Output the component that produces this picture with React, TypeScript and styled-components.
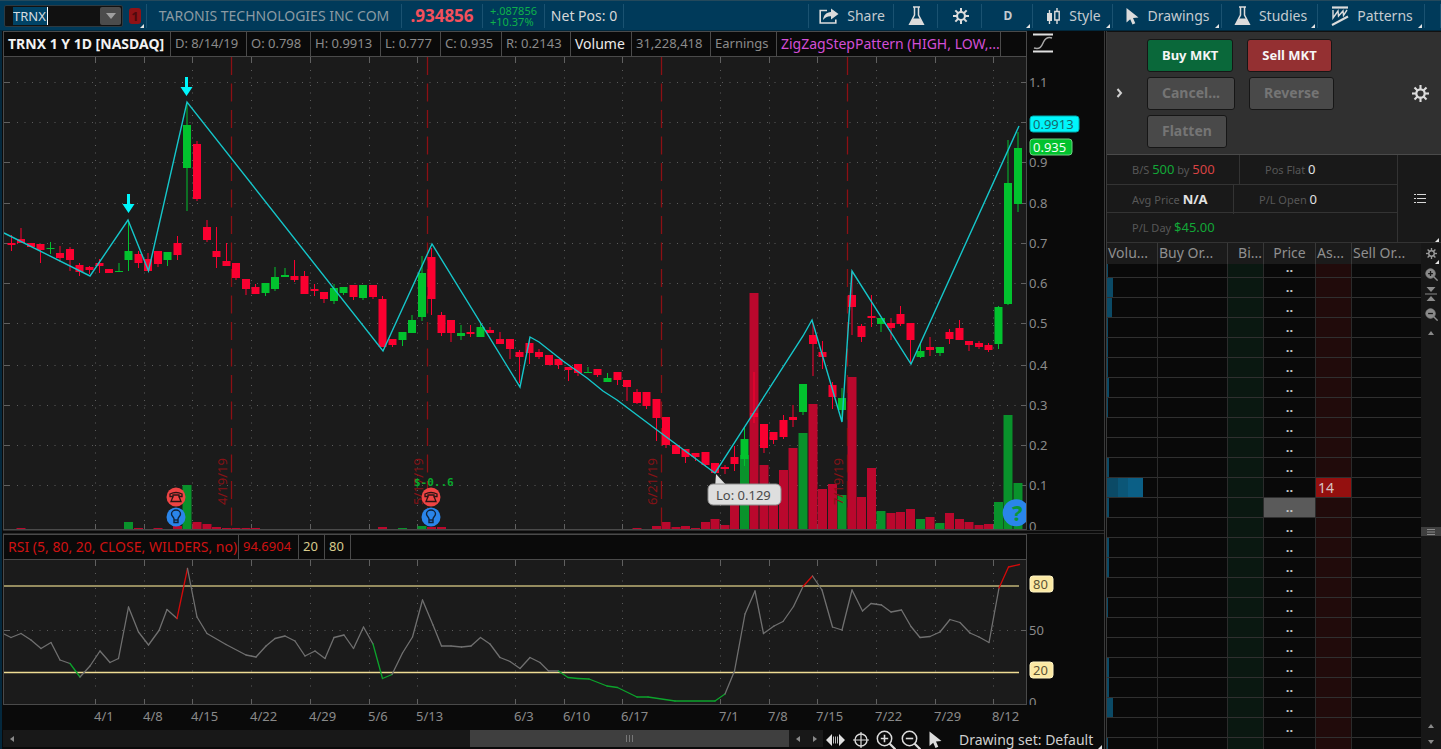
import React from 'react';
import styled, { createGlobalStyle } from 'styled-components';

const GlobalStyle = createGlobalStyle`
  * { box-sizing: border-box; }
  body {
    margin: 0;
    background: #0a0a0a;
    color: #c8c8c8;
    font-family: 'Noto Sans', 'Open Sans', sans-serif;
    font-size: 13px;
    line-height: 18px;
  }
  button, input {
    font: inherit;
    color: inherit;
    margin: 0;
    padding: 0;
    border: 0;
    background: none;
  }
  svg { display: block; }
`;

/* ---------- shell ---------- */

const Page = styled.div`
  display: flex;
  flex-direction: column;
  height: 100vh;
  min-width: 1200px;
  overflow: hidden;
`;

const Body = styled.main`
  display: flex;
  flex: 1;
  min-height: 0;
`;

const ChartPane = styled.section`
  flex: 1;
  min-width: 0;
  padding-left: 3px;
  display: flex;
  flex-direction: column;
  background: linear-gradient(90deg, #04283d 2px, #0a0a0a 2px);
`;

const PaneSplit = styled.div`
  width: 3px;
  background: #0a0a0a;
  border: solid #3a3a3a;
  border-width: 0 1px;
`;

const TradePane = styled.aside`
  width: 334px;
  display: flex;
  flex-direction: column;
  min-height: 0;
  border-top: 1px solid #111;
  background: #1b1b1b;
`;

/* ---------- top toolbar ---------- */

const TopBar = styled.header`
  display: flex;
  height: 31px;
  padding: 3px 0 2px;
  background: #003a5a;
  border-top: 1px solid #24495c;
  border-bottom: 1px solid #02283c;
`;

const barCell = `
  display: flex;
  align-items: center;
  justify-content: center;
  gap: 8px;
  position: relative;
  border-right: 1px solid #1a5271;
  white-space: nowrap;
`;

const BarCell = styled.div<{ $w: number; $tone?: string }>`
  ${barCell}
  width: ${(p) => p.$w}px;
  color: ${(p) => p.$tone || '#d8d8d8'};
  font-size: 14px;
`;

const SymbolCell = styled.div`
  ${barCell}
  width: 147px;
  padding-left: 4px;
  gap: 6px;
  justify-content: flex-start;
`;

const BarButton = styled.button<{ $w: number }>`
  ${barCell}
  width: ${(p) => p.$w}px;
  padding-left: 2px;
  color: #c4cbd0;
  font-size: 14px;
  border-right: 1px solid #1a5271;
`;

const Aggregation = styled.b`
  font-size: 12px;
`;

const BarSpace = styled.div`
  flex: 1;
  border-right: 1px solid #1a5271;
`;

const Corner = styled.i`
  position: absolute;
  right: 2px;
  bottom: 0;
  border: solid transparent;
  border-width: 4px 0 0 4px;
  border-right: 4px solid #e4e4e4;
  border-top: 4px solid transparent;
  border-left: 0;
  width: 0;
  height: 0;
`;

const SymbolBox = styled.div`
  display: flex;
  width: 119px;
  flex: none;
  height: 22px;
  padding: 1px;
  background: #111;
  border: 1px solid #2c3a42;
  border-radius: 2px;
`;

const SymbolInput = styled.input`
  flex: 1;
  min-width: 0;
  padding-left: 7px;
  outline: 0;
  color: #d6dde0;
  background: linear-gradient(90deg, #004366 34px, #fff 34px, #fff 35px, #111 35px) 7px 0 no-repeat;
`;

const SymbolDrop = styled.button`
  width: 21px;
  background: #4c4c4c;
  display: grid;
  place-items: center;
  border-radius: 2px;
`;

const LinkBadge = styled.button`
  width: 12px;
  height: 16px;
  border-radius: 3px;
  background: #8e1216;
  color: #4f0a0d;
  font-weight: 700;
  line-height: 16px;
`;

const LastPrice = styled.strong`
  font-size: 17px;
  color: #f4505c;
`;

const Change = styled.div`
  font-size: 11px;
  line-height: 11px;
  color: #0eb24a;
`;

/* ---------- chart ---------- */

const LegendRow = styled.div`
  display: flex;
  height: 26px;
`;

const Legend = styled.div`
  flex: 1024 1 0;
  min-width: 0;
  display: flex;
  background: #0a0a0a;
  border: 1px solid #4a4a4a;
`;

const LegendCell = styled.div<{ $tone?: string; $strong?: boolean; $size?: number; $w: number }>`
  width: ${(p) => p.$w}px;
  padding-left: 4px;
  font-size: ${(p) => p.$size || 13}px;
  line-height: 23px;
  white-space: nowrap;
  border-right: 1px solid #4a4a4a;
  color: ${(p) => p.$tone || '#8a8a8a'};
  font-weight: ${(p) => (p.$strong ? 700 : 400)};
`;

const LegendAxis = styled.div`
  flex: 77 1 0;
  svg { margin-left: 6px; }
`;

const ChartSvg = styled.svg`
  width: 100%;
  height: auto;
  flex: none;
`;

const StudySplit = styled.div`
  height: 4px;
  flex: none;
  background: #0a0a0a;
  border: solid #2c2c2c;
  border-width: 1px 0;
`;

const Footer = styled.div`
  display: flex;
  flex: 1;
  align-items: flex-start;
  min-height: 19px;
`;

const Scroll = styled.div`
  flex: 1;
  display: flex;
  height: 17px;
  background: #181818;
`;

const ScrollArrow = styled.button`
  width: 17px;
  height: 17px;
  display: grid;
  place-items: center;
`;

const ScrollGap = styled.div<{ $grow: number }>`
  flex: ${(p) => p.$grow} 1 0;
`;

const ScrollThumb = styled.div<{ $grow: number }>`
  flex: ${(p) => p.$grow} 1 0;
  background: #3f3f3f;
  display: grid;
  place-items: center;
`;

const ChartTools = styled.div`
  width: 281px;
  height: 19px;
  display: flex;
  align-items: center;
  position: relative;
`;

const ToolButton = styled.button`
  width: 25px;
  height: 19px;
  display: grid;
  place-items: center;
`;

const DrawingSet = styled.button`
  flex: 1;
  text-align: left;
  padding-left: 11px;
  white-space: nowrap;
  font-size: 14px;
  color: #cfcfcf;
`;

/* ---------- trade panel ---------- */

const OrderBar = styled.div`
  display: flex;
  align-items: center;
  height: 123px;
  background: #303030;
  border-bottom: 1px solid #4a4a4a;
`;

const Expand = styled.button`
  width: 25px;
  height: 24px;
  display: grid;
  place-items: center;
`;

const OrderButtons = styled.div`
  flex: 1;
  display: flex;
  flex-direction: column;
  gap: 5px;
  padding-left: 15px;
`;

const OrderLine = styled.div`
  display: flex;
  gap: 14px;
`;

const OrderButton = styled.button<{ $tone?: string }>`
  height: 33px;
  padding: 0 14px;
  border: 1px solid #161616;
  border-radius: 3px;
  font-weight: 700;
  font-size: ${(p) => (p.$tone ? 13 : 14)}px;
  background: ${(p) => p.$tone || '#494949'};
  color: ${(p) => (p.$tone ? '#f6f6f6' : '#757575')};
`;

const GearButton = styled.button`
  width: 42px;
  height: 30px;
  display: grid;
  place-items: center;
`;

const Summary = styled.div`
  display: flex;
  height: 88px;
  background: #191919;
  border-bottom: 1px solid #333;
`;

const SummaryRows = styled.div`
  width: 291px;
  display: grid;
  grid-template-rows: 30px 28px 1fr;
  border-right: 1px solid #333;
`;

const SummaryRow = styled.div<{ $cols: string }>`
  display: grid;
  grid-template-columns: ${(p) => p.$cols};
  align-items: stretch;
  border-bottom: 1px solid #333;
  &:last-child { border-bottom: 0; }
`;

const SummaryCell = styled.div<{ $line?: boolean }>`
  padding-left: 25px;
  line-height: 29px;
  font-size: 11px;
  white-space: nowrap;
  color: #575757;
  border-right: ${(p) => (p.$line ? '1px solid #333' : '0')};
`;

const Figure = styled.span<{ $tone?: string; $strong?: boolean }>`
  font-size: 13px;
  color: ${(p) => p.$tone || '#e2e2e2'};
  font-weight: ${(p) => (p.$strong ? 700 : 400)};
`;

const ListButton = styled.button`
  flex: 1;
  display: grid;
  place-items: center;
  position: relative;
`;

const LadderWrap = styled.div`
  flex: 1;
  display: flex;
  min-height: 0;
`;

const LadderScroll = styled.div`
  flex: 1;
  min-width: 0;
  overflow: hidden;
`;

const Ladder = styled.table`
  width: 100%;
  table-layout: fixed;
  border-collapse: separate;
  border-spacing: 0;
  background: #090909;
`;

const LadderHead = styled.th<{ $w: number; $align?: string }>`
  width: ${(p) => p.$w}px;
  height: 21px;
  padding: 0 1px 2px;
  background: #1b1b1b;
  border-right: 1px solid #383838;
  font-weight: 400;
  font-size: 14px;
  color: #8f8f8f;
  text-align: ${(p) => p.$align || 'left'};
  white-space: nowrap;
  line-height: 18px;
  &:last-child { border-right: 0; }
`;

const LadderCell = styled.td<{ $bg?: string; $h: number }>`
  height: ${(p) => p.$h}px;
  padding: 0;
  vertical-align: bottom;
  line-height: ${(p) => p.$h - 1}px;
  border-right: 1px solid #2b2b2b;
  border-bottom: 1px solid #303030;
  background: ${(p) => p.$bg || 'transparent'};
  color: #c8c8c8;
  &:last-child { border-right: 0; }
`;

const Dots = styled.div`
  text-align: center;
  height: 6px;
  line-height: 6px;
  margin-bottom: 7px;
  font-weight: 700;
`;

const AskSize = styled.div`
  padding-left: 2px;
  font-size: 14px;
  background: #94100f;
  color: #d8c4c4;
`;

const VolumeBar = styled.div<{ $h: number }>`
  height: ${(p) => p.$h}px;
  background: linear-gradient(90deg, #0b4a66 11px, #0b5677 11px, #0b5677 21px, #0b5f86 21px);
`;

const LadderRail = styled.div`
  width: 20px;
  display: flex;
  flex-direction: column;
  align-items: center;
  background: #171717;
  position: relative;
`;

const RailButton = styled.button<{ $h: number }>`
  width: 20px;
  height: ${(p) => p.$h}px;
  flex: none;
  display: grid;
  place-items: center;
  position: relative;
`;

const RailSpace = styled.div<{ $grow: number }>`
  flex: ${(p) => p.$grow} 1 0;
`;

const RailGrip = styled.div`
  width: 20px;
  height: 9px;
  display: grid;
  place-items: center;
  background: #3f3f3f;
`;

/* ---------- icons ---------- */

const Gear = ({ size, tone, hole }: { size: number; tone: string; hole: string }) => (
  <svg width={size} height={size} viewBox="0 0 16 16" aria-hidden="true">
    {[0, 45, 90, 135].map((a) => (
      <path key={a} d="M8 0v16" stroke={tone} strokeWidth="2" transform={`rotate(${a} 8 8)`} />
    ))}
    <circle cx="8" cy="8" r="5" fill={tone} />
    <circle cx="8" cy="8" r="2.9" fill={hole} />
  </svg>
);

const Flask = () => (
  <svg width="17" height="20" viewBox="0 0 17 20" aria-hidden="true">
    <path d="M5 1h7M6.5 1v8L1.7 18.2h13.6L10.5 9V1" fill="none" stroke="#dcdcdc" strokeWidth="1.5" />
    <path d="M4.6 12.6h7.8l3.2 6.2H1.4z" fill="#dcdcdc" />
  </svg>
);

const ShareIcon = () => (
  <svg width="20" height="16" viewBox="0 0 20 16" aria-hidden="true">
    <path d="M8 2.500H1.200v12.500h15.600V11.500" fill="none" stroke="#dcdcdc" strokeWidth="1.600" />
    <path d="M4 12C4.500 7 7.500 4.200 12 4V.500l7.500 5.500L12 11.500V8.200C8.500 8 6 9.500 4 12z" fill="#dcdcdc" />
  </svg>
);

const Pointer = ({ w, h }: { w: number; h: number }) => (
  <svg width={w} height={h} viewBox="0 0 13 17" aria-hidden="true">
    <path d="M0.500 0v14.500l3.700-3.300 2.300 5.300 2.800-1.200-2.300-5.200 5.500-.5z" fill="#dcdcdc" />
  </svg>
);

const Candles = () => (
  <svg width="15" height="17" viewBox="0 0 15 17" aria-hidden="true">
    <path d="M3.500 2v14M11 0v3M11 12v4" stroke="#dcdcdc" strokeWidth="1.4" />
    <path d="M1 5h5v8H1z" fill="#dcdcdc" />
    <path d="M8.800 3.500h4.400v8.500H8.800z" fill="none" stroke="#dcdcdc" strokeWidth="1.4" />
  </svg>
);

const PatternIcon = () => (
  <svg width="18" height="20" viewBox="0 0 18 20" aria-hidden="true">
    <path d="M1 1.500h16" stroke="#dcdcdc" strokeWidth="2.200" />
    <path d="M2 4v8l5-7 .500 5L12 5l.500 4.500L16 4" fill="none" stroke="#dcdcdc" strokeWidth="1.400" />
    <path d="M1 19L17 10.500" stroke="#dcdcdc" strokeWidth="2" />
  </svg>
);

const Magnifier = ({ size, plus, solid }: { size: number; plus?: boolean; solid?: boolean }) => (
  <svg width={size} height={size} viewBox="0 0 20 20" aria-hidden="true">
    <circle cx="8.500" cy="8.500" r="7.200" fill={solid ? '#8a8a8a' : 'none'} stroke={solid ? '#8a8a8a' : '#dcdcdc'} strokeWidth="1.500" />
    <path d="M13.500 13.500l6 6" stroke={solid ? '#8a8a8a' : '#dcdcdc'} strokeWidth="2.200" />
    <path d={plus ? 'M4.800 8.500h7.400M8.500 4.800v7.400' : 'M4.800 8.500h7.400'} stroke={solid ? '#171717' : '#dcdcdc'} strokeWidth={solid ? 2 : 1.600} />
  </svg>
);

const Tri = ({ dir, tone = '#8a8a8a' }: { dir: 'l' | 'r' | 'u' | 'd'; tone?: string }) => {
  const shape = { l: 'M6 1v6L2 4z', r: 'M2 1v6l4-3z', u: 'M1 6h6L4 2z', d: 'M1 2h6L4 6z' }[dir];
  return (
    <svg width="8" height="8" viewBox="0 0 8 8" aria-hidden="true">
      <path d={shape} fill={tone} />
    </svg>
  );
};

/* ---------- chart data ---------- */

const barX = (i: number) => Math.round((11.3 + i * 9.774) * 2) / 2;

// [up, bodyTop, bodyBottom, wickTop, wickBottom]
const candles: [number, number, number, number, number][] = [
  [0, 243, 245, 235, 251], [0, 239, 243, 228, 243], [0, 243, 247, 243, 247], [0, 244, 250, 244, 263],
  [1, 248, 249, 242, 254], [0, 253, 258, 246, 262], [0, 249, 260, 247, 271], [0, 265, 272, 263, 276],
  [0, 267, 270, 266, 274], [0, 263, 266, 259, 273], [0, 269, 273, 269, 273], [1, 271, 272, 263, 272],
  [1, 251, 260, 220, 271], [0, 254, 263, 251, 268], [0, 259, 271, 253, 271], [0, 251, 264, 251, 267],
  [1, 252, 260, 252, 266], [0, 243, 255, 236, 260], [1, 125, 168, 103, 211], [0, 144, 199, 141, 201],
  [0, 227, 240, 220, 242], [0, 251, 257, 227, 268], [0, 261, 266, 243, 266], [0, 263, 278, 263, 280],
  [0, 279, 289, 279, 295], [0, 287, 294, 284, 294], [1, 283, 293, 283, 296], [1, 277, 289, 267, 291],
  [1, 275, 277, 268, 277], [0, 276, 280, 260, 282], [0, 276, 294, 271, 294], [0, 289, 291, 284, 296],
  [0, 292, 299, 292, 303], [1, 288, 301, 284, 304], [1, 287, 293, 287, 295], [0, 285, 297, 285, 300],
  [1, 285, 298, 285, 300], [0, 285, 297, 285, 299], [0, 299, 347, 296, 347], [0, 339, 345, 339, 347],
  [1, 332, 340, 332, 346], [1, 320, 333, 315, 333], [1, 273, 317, 256, 321], [0, 257, 299, 248, 315],
  [0, 315, 333, 312, 336], [0, 320, 333, 320, 342], [1, 333, 336, 325, 340], [0, 332, 334, 325, 337],
  [1, 327, 337, 323, 337], [0, 330, 333, 327, 333], [0, 339, 344, 332, 344], [0, 339, 349, 339, 359],
  [0, 352, 357, 350, 383], [0, 343, 353, 338, 364], [0, 352, 357, 349, 359], [0, 355, 365, 355, 365],
  [0, 359, 365, 359, 369], [0, 367, 370, 367, 381], [0, 364, 373, 364, 376], [1, 372, 373, 367, 373],
  [0, 369, 375, 369, 377], [1, 378, 382, 373, 382], [0, 372, 380, 372, 385], [0, 380, 387, 380, 401],
  [0, 392, 403, 389, 404], [0, 392, 406, 392, 409], [0, 399, 418, 399, 441], [0, 417, 445, 417, 448],
  [0, 445, 454, 445, 454], [0, 449, 457, 449, 463], [0, 453, 457, 453, 461], [0, 452, 465, 452, 466],
  [0, 463, 473, 463, 473], [0, 467, 469, 465, 474], [0, 457, 464, 446, 471], [1, 439, 459, 427, 466],
  [0, 413, 417, 372, 423], [0, 424, 448, 424, 453], [0, 432, 440, 432, 444], [0, 420, 437, 415, 439],
  [0, 417, 420, 405, 427], [1, 384, 412, 384, 415], [0, 335, 344, 323, 376], [0, 352, 357, 341, 369],
  [0, 385, 397, 382, 409], [1, 398, 410, 388, 421], [0, 295, 307, 271, 335], [0, 326, 337, 324, 342],
  [0, 316, 318, 295, 327], [1, 318, 324, 318, 332], [0, 323, 328, 318, 340], [0, 314, 324, 306, 326],
  [0, 323, 340, 323, 363], [1, 351, 357, 343, 358], [0, 347, 350, 337, 356], [1, 347, 353, 347, 356],
  [0, 332, 339, 329, 344], [0, 328, 340, 320, 340], [0, 341, 345, 341, 351], [0, 343, 347, 341, 349],
  [0, 345, 350, 343, 352], [1, 307, 344, 306, 349], [1, 183, 304, 140, 305], [1, 148, 204, 132, 212],
];

// [bar index, top, up]
const volumes: [number, number, number][] = [
  [1, 528, 0], [12, 522, 1], [13, 528, 0], [15, 528, 0], [17, 526, 0], [18, 485, 1], [19, 522, 0],
  [20, 524, 0], [21, 527, 0], [22, 528, 0], [23, 528, 0], [24, 528, 0], [25, 528, 0], [38, 527, 0],
  [40, 528, 1], [42, 526, 1], [43, 527, 0], [44, 527, 0], [64, 528, 0], [66, 526, 0], [67, 522, 0],
  [68, 527, 0], [69, 526, 0], [70, 528, 0], [71, 522, 0], [72, 519, 0], [73, 525, 0], [74, 490, 0],
  [75, 455, 1], [76, 293, 0], [77, 465, 0], [78, 495, 0], [79, 470, 0], [80, 448, 0], [81, 433, 1],
  [82, 404, 0], [83, 489, 0], [84, 484, 0], [85, 495, 1], [86, 377, 0], [87, 497, 0], [88, 468, 0],
  [89, 511, 1], [90, 513, 0], [91, 512, 0], [92, 509, 0], [93, 519, 1], [94, 517, 0], [95, 523, 1],
  [96, 513, 0], [97, 519, 0], [98, 522, 0], [99, 525, 0], [100, 524, 0], [101, 502, 1], [102, 415, 1],
  [103, 483, 1],
];

const zigzag =
  '4,233 90,276 128,220 148.5,271 187,102 383,351 432,244 520,387 530,337 539,342 563,361 587,378 603,391 617,400 665,436 715,473 803,336 812,320 842,422 852,271 911,364 1019,126';

const rsi: [number, number][] = [
  [4, 634], [11, 637.5], [21, 633.5], [31, 640], [41, 648.5], [51, 642.5], [60, 660], [70, 663.5],
  [80, 677], [90, 666], [100, 651], [110, 662.5], [118.5, 658.5], [128.5, 607], [138.5, 632],
  [148.5, 645], [159, 630.5], [167, 609.5], [177, 618.5], [187.5, 568.5], [197, 617], [207, 633.5],
  [226, 644.5], [246, 655], [256, 657], [266, 646], [275, 638.5], [285, 636], [295, 641], [305, 656],
  [315, 651], [325, 658.5], [334, 637.5], [344, 635], [353.5, 648.5], [363.5, 627], [373, 644],
  [382.5, 678.5], [392, 674.5], [402.5, 653], [412.5, 637], [422.5, 600], [433, 625], [441.5, 646], [451, 646],
  [461.5, 647], [471, 646], [480.5, 637.5], [490, 644], [500, 657.5], [510, 661.5], [520, 668.5],
  [530, 657.5], [540, 662.5], [548.5, 671], [558.5, 671], [568, 677.5], [578, 678.5], [589, 679],
  [607, 686], [617.5, 687.5], [637, 697], [648, 697], [675, 701], [715, 701], [725, 694],
  [734.5, 671], [745, 614], [755, 591], [763.5, 633.5], [774, 626], [783, 621.5], [793.5, 606.5],
  [803, 586.5], [812.5, 576], [822, 590], [832.5, 627], [842, 630], [852, 590], [862.5, 611],
  [871, 603.5], [881.5, 605], [891, 612], [901.5, 610], [911, 626.5], [920, 637.5], [930, 636.5],
  [940, 632], [950, 619.5], [960, 622.5], [970, 633], [979, 637], [989, 642.5], [999, 588],
  [1008.5, 567], [1019.5, 564.5],
];

const rsiTone = (x: number) => {
  if ((x > 177 && x < 190) || (x > 803 && x < 813) || x > 999) return '#d40a0a';
  if ((x > 70 && x <= 80) || (x > 373 && x <= 392) || (x > 560 && x <= 725)) return '#0ca42c';
  return '#707070';
};

const weeks: [number, string][] = [
  [95, '4/1'], [144, '4/8'], [192, '4/15'], [251, '4/22'], [310, '4/29'], [369, '5/6'],
  [417, '5/13'], [515, '6/3'], [564, '6/10'], [622, '6/17'], [720, '7/1'], [769, '7/8'],
  [817, '7/15'], [876, '7/22'], [935, '7/29'], [993, '8/12'],
];

const priceTicks: [number, string][] = [
  [82, '1.1'], [122, ''], [162, '0.9'], [203, '0.8'], [243, '0.7'], [283, '0.6'],
  [323, '0.5'], [365, '0.4'], [405, '0.3'], [445, '0.2'], [485, '0.1'],
];

const expirations: [number, string][] = [
  [231, '4/19/19'], [427, '5/17/19'], [661, '6/21/19'], [847, '7/19/19'],
];

const dot = { stroke: '#5c5c5c', strokeWidth: 1, strokeDasharray: '1 6.5' };

const DownArrow = ({ x, y }: { x: number; y: number }) => (
  <path d={`M${x - 1} ${y}h3v10h4.500l-6 9-6-9h4.500z`} fill="#00f6fb" />
);

const EventPins = ({ x }: { x: number }) => (
  <g>
    <circle cx={x} cy="497" r="9.500" fill="#ee4444" />
    <g fill="none" stroke="#2a1414" strokeWidth="1.300">
      <path d={`M${x - 6} 496.500v-2.500q6-3 12 0v2.500h-3v-1.500h-6v1.500z`} />
      <path d={`M${x - 3} 496.500l-2 5h10l-2-5`} />
    </g>
    <circle cx={x} cy="517" r="9.500" fill="#2a85ea" />
    <g fill="none" stroke="#10233c" strokeWidth="1.400">
      <path d={`M${x - 2} 519c0-2-2.500-2.500-2.500-5a4.500 4 0 0 1 9 0c0 2.500-2.500 3-2.500 5v3.500h-4z`} />
      <path d={`M${x - 2} 520h4`} />
    </g>
  </g>
);

const AxisTag = ({ y, w, fill, edge, ink, children }: { y: number; w: number; fill: string; edge: string; ink: string; children: string }) => (
  <g>
    <rect x="1030" y={y - 8} width={w} height="16" rx="3" fill={fill} stroke={edge} />
    <text x="1033" y={y + 5} fill={ink}>{children}</text>
  </g>
);

const PriceChart = () => (
  <ChartSvg viewBox="3 57 1101 473" fontSize="13" fill="#8a8a8a" role="img" aria-label="TRNX daily price chart">
    <rect x="3" y="57" width="1024" height="473" fill="#1b1b1b" />
    {weeks.map(([x]) => (
      <g key={x}>
        <path d={`M${x}.500 70V524`} {...dot} />
        <path d={`M${x}.500 57v6M${x}.500 524v5`} stroke="#606060" />
      </g>
    ))}
    {priceTicks.map(([y]) => (
      <g key={y}>
        <path d={`M17 ${y}.500H1020`} {...dot} />
        <path d={`M4 ${y}.500h6M1021 ${y}.500h5`} stroke="#606060" />
      </g>
    ))}
    {volumes.map(([i, top, up]) => (
      <rect key={i} x={barX(i) - 4.5} y={top} width="9" height={529 - top} fill={up ? '#09922b' : '#ba082d'} />
    ))}
    {expirations.map(([x, label]) => (
      <g key={x}>
        <path d={`M${x}.500 57V529`} fill="none" stroke="#8c1014" strokeWidth="1.300" strokeDasharray="18 8.500" />
        <text transform={`translate(${x - 4} 505) rotate(-90)`} fill="#861216">{label}</text>
      </g>
    ))}
    {candles.map(([up, top, bottom, high, low], i) => (
      <g key={i} fill={up ? '#02c22e' : '#fb0030'}>
        <rect x={barX(i) - 4} y={top} width="8" height={bottom - top} />
        <rect x={barX(i) - 0.5} y={high} width="1" height={low - high} />
      </g>
    ))}
    <polyline points={zigzag} fill="none" stroke="#15c6ca" strokeWidth="1.400" />
    <DownArrow x={186} y={77} />
    <DownArrow x={128} y={194} />
    <EventPins x={176} />
    <EventPins x={431} />
    <text x="414" y="486" fontFamily="'DejaVu Sans Mono', monospace" fontSize="11" fontWeight="700" fill="#0aa82c">$-0..6</text>
    <path d="M716 474l-1 14h14z" fill="#dedede" />
    <rect x="708" y="484" width="73" height="21" rx="5" fill="#dedede" stroke="#8d8d8d" />
    <text x="716" y="500" fill="#4a4a4a">Lo: 0.129</text>
    <path d="M1026 503.500a13.500 13.500 0 1 0 0 18.500z" fill="#2a85ea" />
    <text x="1012" y="521" fontSize="22" fontWeight="700" fill="#0b9638">?</text>
    <path d="M3.500 57V530M1026.500 57V530M3 529.500H1027" stroke="#4a4a4a" />
    {priceTicks.map(([y, label]) => (
      <text key={y} x="1029" y={y + 5}>{label}</text>
    ))}
    <text x="1029" y="531">0</text>
    <AxisTag y={124} w={49} fill="#00f6fb" edge="#00a9ad" ink="#17696b">0.9913</AxisTag>
    <AxisTag y={147} w={42} fill="#02c22e" edge="#6fd084" ink="#f2fff4">0.935</AxisTag>
  </ChartSvg>
);

const RsiChart = () => (
  <ChartSvg viewBox="3 560 1101 170" fontSize="13" fill="#8a8a8a" role="img" aria-label="RSI study">
    <rect x="3" y="560" width="1024" height="144" fill="#1b1b1b" />
    {weeks.map(([x, label]) => (
      <g key={x}>
        <path d={`M${x}.500 573V690`} {...dot} />
        <path d={`M${x}.500 560v6M${x}.500 699v5`} stroke="#606060" />
        <text x={x - 1} y="721">{label}</text>
      </g>
    ))}
    <path d="M17 630.500H1020" {...dot} />
    <path d="M4 630.500h6M1021 630.500h5" stroke="#606060" />
    <path d="M4 586H1019" stroke="#bfb377" strokeWidth="1.400" />
    <path d="M4 672.500H1019" stroke="#efdc94" strokeWidth="1.400" />
    {rsi.slice(1).map(([x, y], i) => (
      <path key={i} d={`M${rsi[i][0]} ${rsi[i][1]}L${x} ${y}`} stroke={rsiTone(x)} strokeWidth="1.300" strokeLinecap="round" />
    ))}
    <path d="M3.500 560V704M1026.500 560V704M3 704.500H1027" stroke="#4a4a4a" />
    <text x="1029" y="635">50</text>
    <svg x="1027" y="690" width="30" height="15" viewBox="1027 690 30 15">
      <text x="1029" y="707">0</text>
    </svg>
    <AxisTag y={584} w={23} fill="#fbe9a4" edge="#fff4c4" ink="#5c5334">80</AxisTag>
    <AxisTag y={670} w={23} fill="#fbe9a4" edge="#fff4c4" ink="#5c5334">20</AxisTag>
  </ChartSvg>
);

/* ---------- ladder ---------- */

const ladderVolumes = [1, 6, 5, 1, 1, 1, 2, 1, 0, 0, 2, 36, 2, 0, 2, 2, 0, 1, 0, 0, 2, 2, 6, 0, 1];

const LadderTable = () => (
  <Ladder>
    <thead>
      <tr>
        <LadderHead $w={51}>Volu...</LadderHead>
        <LadderHead $w={70}>Buy Or...</LadderHead>
        <LadderHead $w={36} $align="right">Bi...</LadderHead>
        <LadderHead $w={52} $align="center">Price</LadderHead>
        <LadderHead $w={36}>As...</LadderHead>
        <LadderHead $w={69}>Sell Or...</LadderHead>
      </tr>
    </thead>
    <tbody>
      {ladderVolumes.map((v, i) => {
        const h = i === 0 ? 14 : 20;
        return (
          <tr key={i}>
            <LadderCell $h={h}><VolumeBar $h={h - 1} style={{ width: v }} /></LadderCell>
            <LadderCell $h={h} />
            <LadderCell $h={h} $bg="#0a1811" />
            <LadderCell $h={h} $bg={i === 12 ? '#5a5a5a' : undefined}>
              {i < ladderVolumes.length - 1 && <Dots>..</Dots>}
            </LadderCell>
            <LadderCell $h={h} $bg="#210b0b">{i === 11 && <AskSize>14</AskSize>}</LadderCell>
            <LadderCell $h={h} />
          </tr>
        );
      })}
    </tbody>
  </Ladder>
);

/* ---------- page ---------- */

export default function App() {
  return (
    <Page>
      <GlobalStyle />
      <TopBar>
        <SymbolCell>
          <SymbolBox>
            <SymbolInput aria-label="Symbol" defaultValue="TRNX" />
            <SymbolDrop aria-label="Recent symbols">
              <svg width="10" height="6" viewBox="0 0 10 6"><path d="M0 0h10L5 6z" fill="#a0a0a0" /></svg>
            </SymbolDrop>
          </SymbolBox>
          <LinkBadge aria-label="Symbol link">1</LinkBadge>
          <Corner />
        </SymbolCell>
        <BarCell $w={255} $tone="#8b9aa3">TARONIS TECHNOLOGIES INC COM</BarCell>
        <BarCell $w={81}><LastPrice>.934856</LastPrice></BarCell>
        <BarCell $w={62}><Change>+.087856<br />+10.37%</Change></BarCell>
        <BarCell $w={79}>Net Pos: 0</BarCell>
        <BarSpace />
        <BarButton $w={85}><ShareIcon />Share</BarButton>
        <BarButton $w={44} aria-label="Quick study"><Flask /></BarButton>
        <BarButton $w={44} aria-label="Chart settings"><Gear size={16} tone="#dcdcdc" hole="#003a5a" /></BarButton>
        <BarButton $w={51}><Aggregation>D</Aggregation><Corner /></BarButton>
        <BarButton $w={80}><Candles />Style<Corner /></BarButton>
        <BarButton $w={109}><Pointer w={13} h={17} />Drawings<Corner /></BarButton>
        <BarButton $w={96}><Flask />Studies<Corner /></BarButton>
        <BarButton $w={107}><PatternIcon />Patterns<Corner /></BarButton>
        <BarCell $w={16} />
      </TopBar>

      <Body>
        <ChartPane>
          <LegendRow>
            <Legend>
              <LegendCell $w={167} $size={14} $tone="#f2f2f2" $strong>TRNX 1 Y 1D [NASDAQ]</LegendCell>
              <LegendCell $w={76}>D: 8/14/19</LegendCell>
              <LegendCell $w={64}>O: 0.798</LegendCell>
              <LegendCell $w={70}>H: 0.9913</LegendCell>
              <LegendCell $w={60}>L: 0.777</LegendCell>
              <LegendCell $w={61}>C: 0.935</LegendCell>
              <LegendCell $w={69}>R: 0.2143</LegendCell>
              <LegendCell $w={61} $size={14} $tone="#eaeaea">Volume</LegendCell>
              <LegendCell $w={79}>31,228,418</LegendCell>
              <LegendCell $w={66}>Earnings</LegendCell>
              <LegendCell $w={224} $size={14} $tone="#d34fd6">ZigZagStepPattern (HIGH, LOW,...</LegendCell>
            </Legend>
            <LegendAxis>
              <svg width="20" height="24" viewBox="0 0 20 24" aria-hidden="true">
                <path d="M0 3.500h20M0 20.500h20" stroke="#e0e0e0" strokeWidth="2" />
                <path d="M1 17c7 2 8-3 9.500-6S14 5.500 19 7" fill="none" stroke="#a8a8a8" strokeWidth="1.500" />
              </svg>
            </LegendAxis>
          </LegendRow>
          <PriceChart />
          <StudySplit />
          <LegendRow>
            <Legend>
              <LegendCell $w={235} $size={14} $tone="#cf1212">RSI (5, 80, 20, CLOSE, WILDERS, no)</LegendCell>
              <LegendCell $w={60} $tone="#cf1212">94.6904</LegendCell>
              <LegendCell $w={26} $tone="#d8cb8c">20</LegendCell>
              <LegendCell $w={26} $tone="#d8cb8c">80</LegendCell>
            </Legend>
            <LegendAxis />
          </LegendRow>
          <RsiChart />
          <Footer>
            <Scroll>
              <ScrollArrow aria-label="Scroll left"><Tri dir="l" /></ScrollArrow>
              <ScrollGap $grow={450} />
              <ScrollThumb $grow={319}>
                <svg width="7" height="7" viewBox="0 0 7 7"><path d="M.500 0v7M3.500 0v7M6.500 0v7" stroke="#777" /></svg>
              </ScrollThumb>
              <ScrollArrow aria-label="Scroll left one bar"><Tri dir="l" /></ScrollArrow>
              <ScrollArrow aria-label="Scroll right one bar"><Tri dir="r" /></ScrollArrow>
            </Scroll>
            <ChartTools>
              <ToolButton aria-label="Fit bars">
                <svg width="19" height="12" viewBox="0 0 19 12">
                  <path d="M6 0v12L0 6zM13 0v12l6-6z" fill="#e0e0e0" />
                  <path d="M7.500 2.500v7M9.500 2.500v7M11.500 2.500v7" stroke="#c0c0c0" />
                </svg>
              </ToolButton>
              <ToolButton aria-label="Crosshair">
                <svg width="16" height="16" viewBox="0 0 16 16">
                  <circle cx="8" cy="8" r="6" fill="none" stroke="#dcdcdc" strokeWidth="1.400" />
                  <path d="M8 0v16M0 8h16" stroke="#dcdcdc" strokeWidth="1.200" />
                </svg>
              </ToolButton>
              <ToolButton aria-label="Zoom in"><Magnifier size={20} plus /></ToolButton>
              <ToolButton aria-label="Zoom out"><Magnifier size={20} /></ToolButton>
              <ToolButton aria-label="Pointer"><Pointer w={13} h={18} /></ToolButton>
              <DrawingSet>Drawing set: Default</DrawingSet>
              <Corner />
            </ChartTools>
          </Footer>
        </ChartPane>

        <PaneSplit />

        <TradePane>
          <OrderBar>
            <Expand aria-label="Expand">
              <svg width="7" height="10" viewBox="0 0 7 10"><path d="M1.500 1l3.500 4-3.500 4" fill="none" stroke="#d0d0d0" strokeWidth="2" /></svg>
            </Expand>
            <OrderButtons>
              <OrderLine>
                <OrderButton $tone="#0a683a">Buy MKT</OrderButton>
                <OrderButton $tone="#943032">Sell MKT</OrderButton>
              </OrderLine>
              <OrderLine>
                <OrderButton>Cancel...</OrderButton>
                <OrderButton>Reverse</OrderButton>
              </OrderLine>
              <OrderLine>
                <OrderButton>Flatten</OrderButton>
              </OrderLine>
            </OrderButtons>
            <GearButton aria-label="Order settings"><Gear size={17} tone="#dcdcdc" hole="#303030" /></GearButton>
          </OrderBar>

          <Summary>
            <SummaryRows>
              <SummaryRow $cols="133px 1fr">
                <SummaryCell $line>B/S <Figure $tone="#12a737">500</Figure> by <Figure $tone="#d84343">500</Figure></SummaryCell>
                <SummaryCell>Pos Flat <Figure>0</Figure></SummaryCell>
              </SummaryRow>
              <SummaryRow $cols="127px 1fr">
                <SummaryCell $line>Avg Price <Figure $strong>N/A</Figure></SummaryCell>
                <SummaryCell>P/L Open <Figure>0</Figure></SummaryCell>
              </SummaryRow>
              <SummaryRow $cols="1fr">
                <SummaryCell>P/L Day <Figure $tone="#12a737">$45.00</Figure></SummaryCell>
              </SummaryRow>
            </SummaryRows>
            <ListButton aria-label="Show list">
              <svg width="12" height="11" viewBox="0 0 12 11">
                <path d="M0 1.500h2M0 5.500h2M0 9.500h2M3 1.500h9M3 5.500h9M3 9.500h9" stroke="#d8d8d8" />
              </svg>
              <Corner />
            </ListButton>
          </Summary>

          <LadderWrap>
            <LadderScroll><LadderTable /></LadderScroll>
            <LadderRail>
              <RailButton $h={21} aria-label="Ladder settings"><Gear size={11} tone="#9a9a9a" hole="#171717" /><Corner /></RailButton>
              <RailButton $h={20} aria-label="Zoom in"><Magnifier size={13} plus solid /></RailButton>
              <RailButton $h={20} aria-label="Center price">
                <svg width="12" height="14" viewBox="0 0 12 14">
                  <path d="M1.500 0h9L6 5zM1.500 14h9L6 9z" fill="#8a8a8a" />
                  <path d="M0 7h12" stroke="#8a8a8a" />
                </svg>
              </RailButton>
              <RailButton $h={20} aria-label="Zoom out"><Magnifier size={13} solid /></RailButton>
              <RailButton $h={18} aria-label="Scroll up"><Tri dir="u" /></RailButton>
              <RailSpace $grow={185} />
              <RailGrip>
                <svg width="8" height="6" viewBox="0 0 8 6"><path d="M0 .500h8M0 3h8M0 5.500h8" stroke="#8a8a8a" /></svg>
              </RailGrip>
              <RailSpace $grow={182} />
              <RailButton $h={16} aria-label="Page up"><Tri dir="u" /></RailButton>
              <RailButton $h={15} aria-label="Page down"><Tri dir="d" /></RailButton>
            </LadderRail>
          </LadderWrap>
        </TradePane>
      </Body>
    </Page>
  );
}
